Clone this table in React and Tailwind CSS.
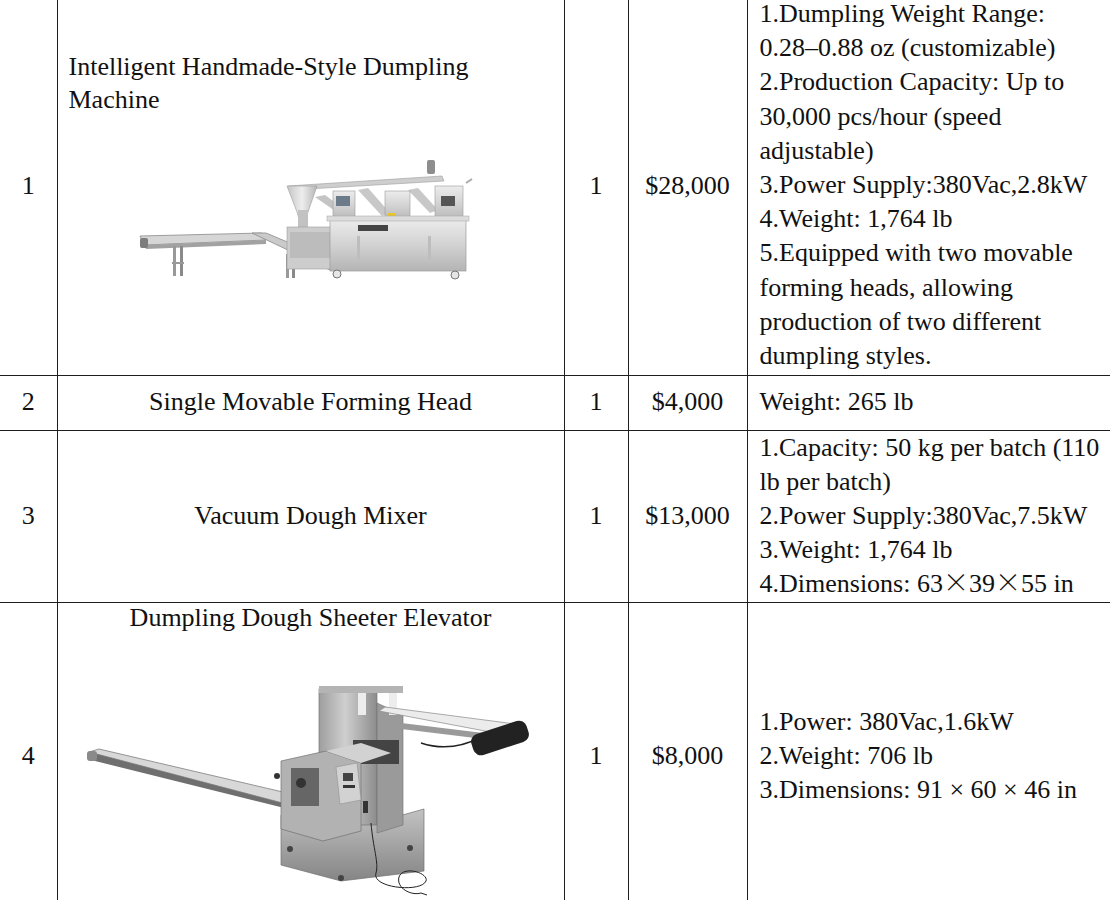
import React from 'react';

function FormingMachine() {
  return (
    <svg width="345" height="135" viewBox="148 155 345 135" className="block">
      <defs>
        <linearGradient id="steelA" x1="0" y1="0" x2="0" y2="1">
          <stop offset="0" stopColor="#ececec" />
          <stop offset="0.5" stopColor="#d2d2d2" />
          <stop offset="1" stopColor="#b4b4b4" />
        </linearGradient>
        <linearGradient id="steelB" x1="0" y1="0" x2="1" y2="0">
          <stop offset="0" stopColor="#c4c4c4" />
          <stop offset="0.5" stopColor="#ededed" />
          <stop offset="1" stopColor="#b6b6b6" />
        </linearGradient>
      </defs>
      {/* left flat conveyor */}
      <polygon points="150,236 272,233 276,240 154,245" fill="#d6d6d6" stroke="#8a8a8a" strokeWidth="0.8" />
      <polygon points="154,245 276,240 276,244 156,249" fill="#a2a2a2" />
      <rect x="150" y="238" width="8" height="10" rx="2" fill="#7d7d7d" />
      {/* sloped conveyor */}
      <polygon points="262,233 276,233 345,262 340,270" fill="#cacaca" stroke="#8a8a8a" strokeWidth="0.8" />
      {/* legs */}
      <rect x="183" y="246" width="3" height="30" fill="#999" />
      <rect x="190" y="246" width="3" height="30" fill="#8a8a8a" />
      <rect x="182" y="262" width="12" height="2" fill="#999" />
      <rect x="296" y="254" width="3" height="24" fill="#999" />
      <rect x="302" y="254" width="3" height="24" fill="#8a8a8a" />
      {/* top rail */}
      <polygon points="298,186 452,176 454,181 300,190" fill="#cecece" stroke="#9c9c9c" strokeWidth="0.6" />
      {/* hopper */}
      <polygon points="297,186 327,186 318,212 312,230 307,212" fill="url(#steelB)" stroke="#9a9a9a" strokeWidth="0.6" />
      <rect x="308" y="210" width="10" height="20" fill="#c2c2c2" />
      {/* slanted arms */}
      <polygon points="325,197 335,195 355,210 348,213" fill="#c4c4c4" />
      <polygon points="368,190 378,188 400,213 392,216" fill="#c8c8c8" />
      <polygon points="418,190 428,188 448,210 440,213" fill="#c8c8c8" />
      {/* control boxes */}
      <rect x="343" y="191" width="22" height="30" fill="url(#steelA)" stroke="#9c9c9c" strokeWidth="0.6" />
      <rect x="346" y="196" width="14" height="10" fill="#6b7b8a" />
      <rect x="395" y="191" width="25" height="30" fill="url(#steelA)" stroke="#9c9c9c" strokeWidth="0.6" />
      <rect x="398" y="213" width="8" height="6" fill="#e6c62a" />
      <rect x="445" y="186" width="28" height="36" fill="url(#steelA)" stroke="#9c9c9c" strokeWidth="0.6" />
      <rect x="451" y="196" width="14" height="10" fill="#555" />
      <rect x="437" y="160" width="8" height="14" rx="2" fill="#8d8d8d" />
      {/* main body */}
      <rect x="297" y="227" width="46" height="42" fill="#cdcdcd" stroke="#9c9c9c" strokeWidth="0.6" />
      <rect x="300" y="232" width="40" height="26" fill="#bcbcbc" />
      <rect x="340" y="219" width="136" height="52" fill="url(#steelA)" stroke="#9c9c9c" strokeWidth="0.7" />
      <rect x="337" y="216" width="142" height="5" fill="#dcdcdc" stroke="#a4a4a4" strokeWidth="0.5" />
      <rect x="368" y="225" width="30" height="6" fill="#444" />
      <rect x="367" y="236" width="3" height="24" fill="#bdbdbd" />
      <rect x="438" y="236" width="3" height="24" fill="#bdbdbd" />
      {/* wheels */}
      <circle cx="347" cy="274" r="4" fill="#e6e6e6" stroke="#777" strokeWidth="1" />
      <circle cx="465" cy="275" r="4" fill="#e6e6e6" stroke="#777" strokeWidth="1" />
      <path d="M476,183 l6,-4" stroke="#aaa" strokeWidth="2" />
    </svg>
  );
}

function SheeterMachine() {
  return (
    <svg width="450" height="215" viewBox="84 680 450 215" className="block">
      <defs>
        <linearGradient id="bodyA" x1="0" y1="0" x2="1" y2="0">
          <stop offset="0" stopColor="#9e9e9e" />
          <stop offset="0.45" stopColor="#cfcfcf" />
          <stop offset="1" stopColor="#8c8c8c" />
        </linearGradient>
        <linearGradient id="bodyB" x1="0" y1="0" x2="0" y2="1">
          <stop offset="0" stopColor="#c2c2c2" />
          <stop offset="1" stopColor="#858585" />
        </linearGradient>
      </defs>
      {/* long left conveyor */}
      <polygon points="88,749 98,746 316,797 312,808" fill="#d8d8d8" stroke="#7f7f7f" strokeWidth="0.8" />
      <polygon points="88,749 312,808 312,812 90,757" fill="#6f6f6f" />
      <rect x="86" y="748" width="10" height="10" rx="3" fill="#8a8a8a" />
      {/* base */}
      <polygon points="280,812 380,818 423,806 423,868 340,878 280,862" fill="url(#bodyB)" stroke="#707070" strokeWidth="0.7" />
      {/* upper tower */}
      <rect x="318" y="686" width="58" height="136" fill="url(#bodyA)" stroke="#777" strokeWidth="0.7" />
      <polygon points="376,700 402,712 402,822 376,830" fill="#9a9a9a" stroke="#707070" strokeWidth="0.6" />
      <rect x="318" y="683" width="84" height="7" fill="#b4b4b4" />
      <rect x="357" y="690" width="8" height="22" fill="#ededed" />
      <rect x="388" y="690" width="8" height="22" fill="#ededed" />
      <rect x="352" y="737" width="46" height="24" fill="#444" />
      {/* right conveyor */}
      <polygon points="378,708 384,704 522,722 516,734" fill="#ececec" stroke="#888" strokeWidth="0.7" />
      <polygon points="384,718 516,734 516,740 384,724" fill="#9a9a9a" />
      <rect x="470" y="724" width="58" height="22" rx="8" fill="#222" transform="rotate(-18 499 735)" />
      <path d="M420,740 q30,10 60,-6" stroke="#222" strokeWidth="1.5" fill="none" />
      {/* front box */}
      <polygon points="280,758 325,748 360,760 360,828 322,838 280,826" fill="#b2b2b2" stroke="#707070" strokeWidth="0.7" />
      <polygon points="325,748 360,760 390,750 360,740" fill="#d2d2d2" />
      <rect x="290" y="765" width="28" height="38" fill="#666" />
      <circle cx="300" cy="780" r="5" fill="#333" />
      <circle cx="276" cy="773" r="3" fill="#333" />
      <polygon points="335,764 356,760 360,797 339,801" fill="#d2d2d2" stroke="#888" strokeWidth="0.5" />
      <rect x="342" y="770" width="10" height="8" fill="#444" />
      <rect x="342" y="782" width="12" height="3" fill="#333" />
      <rect x="362" y="798" width="5" height="12" fill="#333" />
      {/* wheels */}
      <circle cx="289" cy="846" r="3" fill="#444" />
      <circle cx="340" cy="875" r="3" fill="#444" />
      <circle cx="409" cy="845" r="3" fill="#444" />
      {/* cable */}
      <path d="M370,820 C372,845 378,860 375,870 C370,885 420,890 425,878 C428,870 402,862 398,874 C395,885 410,893 420,890 l6,2" stroke="#222" strokeWidth="1" fill="none" />
    </svg>
  );
}

const cellB = "border-b-[1.5px] border-[#1e1e1e] font-['Liberation_Serif',serif]";
const cellL = "border-[#1e1e1e] font-['Liberation_Serif',serif]";
const cjk = "font-['Noto_Sans_CJK_SC',sans-serif] font-light leading-none";

export default function App() {
  return (
    <div className="w-[1110px] h-[900px] overflow-hidden bg-white text-[#111] font-['Liberation_Serif',serif]">
      <table className="-mt-[3px] w-[1110px] border-collapse text-[26px] leading-[34.2px] table-fixed font-['Liberation_Serif',serif]">
        <colgroup>
          <col className="w-[57px]" />
          <col className="w-[507px]" />
          <col className="w-[64px]" />
          <col className="w-[119px]" />
          <col className="w-[363px]" />
        </colgroup>
        <tbody>
          <tr className="h-[378px]">
            <td className={`${cellB} border-r-[1.5px] text-center align-middle`}>1</td>
            <td className={`${cellB} border-r-[1.5px] align-top px-[11px] pt-[53px]`}>
              <div className="leading-[33px]">Intelligent Handmade-Style Dumpling<br />Machine</div>
              <div className="mt-[39px] ml-[69px]">
                <FormingMachine />
              </div>
            </td>
            <td className={`${cellB} border-r-[1.5px] text-center`}>1</td>
            <td className={`${cellB} border-r-[1.5px] text-center`}>$28,000</td>
            <td className={`${cellB} pl-[12px] align-top`}>
              1.Dumpling Weight Range:<br />
              0.28–0.88 oz (customizable)<br />
              2.Production Capacity: Up to<br />
              30,000 pcs/hour (speed<br />
              adjustable)<br />
              3.Power Supply:380Vac,2.8kW<br />
              4.Weight: 1,764 lb<br />
              5.Equipped with two movable<br />
              forming heads, allowing<br />
              production of two different<br />
              dumpling styles.
            </td>
          </tr>
          <tr className="h-[55px]">
            <td className={`${cellB} border-r-[1.5px] text-center`}>2</td>
            <td className={`${cellB} border-r-[1.5px] text-center`}>Single Movable Forming Head</td>
            <td className={`${cellB} border-r-[1.5px] text-center`}>1</td>
            <td className={`${cellB} border-r-[1.5px] text-center`}>$4,000</td>
            <td className={`${cellB} pl-[12px]`}>Weight: 265 lb</td>
          </tr>
          <tr className="h-[171px]">
            <td className={`${cellB} border-r-[1.5px] text-center`}>3</td>
            <td className={`${cellB} border-r-[1.5px] text-center`}>Vacuum Dough Mixer</td>
            <td className={`${cellB} border-r-[1.5px] text-center`}>1</td>
            <td className={`${cellB} border-r-[1.5px] text-center`}>$13,000</td>
            <td className={`${cellB} pl-[12px]`}>
              1.Capacity: 50 kg per batch (110<br />
              lb per batch)<br />
              2.Power Supply:380Vac,7.5kW<br />
              3.Weight: 1,764 lb<br />
              4.Dimensions: 63<span className={cjk}>×</span>39<span className={cjk}>×</span>55 in
            </td>
          </tr>
          <tr className="h-[308px]">
            <td className={`${cellL} border-r-[1.5px] text-center`}>4</td>
            <td className={`${cellL} border-r-[1.5px] align-top text-center`}>
              <div className="leading-[30px]">Dumpling Dough Sheeter Elevator</div>
              <div className="mt-[50px] ml-[27px]">
                <SheeterMachine />
              </div>
            </td>
            <td className={`${cellL} border-r-[1.5px] text-center`}>1</td>
            <td className={`${cellL} border-r-[1.5px] text-center`}>$8,000</td>
            <td className={`${cellL} pl-[12px]`}>
              1.Power: 380Vac,1.6kW<br />
              2.Weight: 706 lb<br />
              3.Dimensions: 91 × 60 × 46 in
            </td>
          </tr>
        </tbody>
      </table>
    </div>
  );
}
